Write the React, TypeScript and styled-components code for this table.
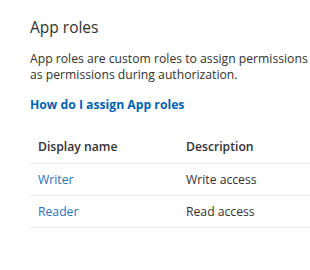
import styled, { createGlobalStyle } from 'styled-components';

const GlobalStyle = createGlobalStyle`
  body {
    margin: 0;
    background: #ffffff;
    font-family: "Open Sans", "Noto Sans", sans-serif;
    color: #323130;
  }
`;

interface AppRole {
  name: string;
  description: string;
}

const roles: AppRole[] = [
  { name: 'Writer', description: 'Write access' },
  { name: 'Reader', description: 'Read access' },
];

export default function App() {
  return (
    <>
      <GlobalStyle />
      <Page>
        <Heading>App roles</Heading>
        <Intro>
          App roles are custom roles to assign permissions to users or apps. The application defines and publishes the app roles and interprets them
          <br />
          as permissions during authorization.
        </Intro>
        <HelpLink href="#">How do I assign App roles</HelpLink>
        <Table>
          <thead>
            <tr>
              <HeadCell $width={148}>Display name</HeadCell>
              <HeadCell>Description</HeadCell>
            </tr>
          </thead>
          <tbody>
            {roles.map((role) => (
              <tr key={role.name}>
                <Cell>
                  <RoleLink href="#">{role.name}</RoleLink>
                </Cell>
                <Cell>{role.description}</Cell>
              </tr>
            ))}
          </tbody>
        </Table>
      </Page>
    </>
  );
}

const Page = styled.div`
  width: 310px;
  height: 270px;
  overflow: hidden;
  padding: 17px 0 0 30px;
  box-sizing: border-box;
`;

const Heading = styled.h2`
  margin: 0;
  font-size: 15.5px;
  font-weight: 400;
  line-height: 20px;
  color: #323130;
`;

const Intro = styled.p`
  margin: 14px 0 0;
  font-size: 12.2px;
  line-height: 16px;
  white-space: nowrap;
  color: #323130;
`;

const HelpLink = styled.a`
  display: block;
  margin-top: 14px;
  font-size: 12.2px;
  font-weight: 700;
  line-height: 16px;
  color: #0063b1;
  text-decoration: none;
`;

const Table = styled.table`
  margin-top: 17px;
  width: 300px;
  border-collapse: collapse;
  table-layout: fixed;
`;

const HeadCell = styled.th<{ $width?: number }>`
  width: ${(p) => (p.$width ? `${p.$width}px` : 'auto')};
  height: 33px;
  padding: 0 0 0 8px;
  text-align: left;
  vertical-align: middle;
  font-size: 12.2px;
  font-weight: 600;
  color: #323130;
  border-bottom: 1px solid #edebe9;
  box-sizing: border-box;
`;

const Cell = styled.td`
  height: 32px;
  padding: 0 0 0 8px;
  font-size: 12.2px;
  color: #323130;
  border-bottom: 1px solid #edebe9;
  vertical-align: middle;
  box-sizing: border-box;
`;

const RoleLink = styled.a`
  color: #2b6fbf;
  text-decoration: none;
`;
